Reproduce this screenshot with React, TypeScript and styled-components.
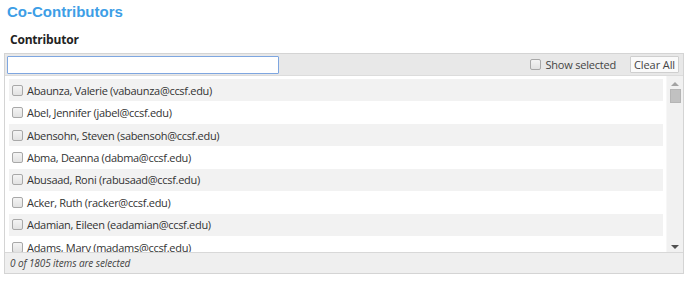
import React, { useState } from 'react';
import styled, { createGlobalStyle } from 'styled-components';

const GlobalStyle = createGlobalStyle`
  html, body {
    margin: 0;
    padding: 0;
    background: #fff;
  }
  body {
    font-family: 'Open Sans', 'Liberation Sans', sans-serif;
    color: #333;
  }
`;

const Page = styled.div`
  width: 689px;
  height: 282px;
  padding: 0 5px 0 4px;
  box-sizing: border-box;
`;

const Title = styled.h2`
  margin: 0;
  padding: 3px 0 0 3px;
  font-family: 'Liberation Sans', Arial, sans-serif;
  font-size: 15px;
  font-weight: bold;
  line-height: 18px;
  color: #3d9ee6;
`;

const Label = styled.h3`
  margin: 0;
  padding: 10px 0 0 6px;
  font-size: 12px;
  letter-spacing: -0.2px;
  font-weight: 700;
  line-height: 17px;
  color: #222;
`;

const Panel = styled.div`
  margin-top: 5px;
  border: 1px solid #d4d4d4;
  display: flex;
  flex-direction: column;
`;

const Toolbar = styled.div`
  display: flex;
  align-items: center;
  height: 21px;
  padding: 0 4px 0 2px;
  background: #e8e8e8;
  border-bottom: 1px solid #dcdcdc;
`;

const Search = styled.input`
  width: 272px;
  height: 18px;
  box-sizing: border-box;
  margin: 0;
  border: 1px solid #7ea6e0;
  border-radius: 1px;
  background: #fff;
  outline: none;
`;

const Spacer = styled.div`
  flex: 1;
`;

const ShowSelected = styled.label`
  display: flex;
  align-items: center;
  gap: 4px;
  font-size: 11px;
  letter-spacing: -0.2px;
  color: #444;
  margin-right: 14px;
`;

const Box = styled.span`
  display: inline-block;
  width: 9px;
  height: 9px;
  border: 1px solid #a8a8a8;
  border-radius: 2px;
  background: linear-gradient(#f4f4f4, #e2e2e2);
  flex: none;
`;

const ClearButton = styled.button`
  height: 17px;
  padding: 0 3px;
  font-family: 'Open Sans', 'Liberation Sans', sans-serif;
  font-size: 11px;
  letter-spacing: -0.1px;
  line-height: 15px;
  color: #444;
  background: #fafafa;
  border: 1px solid #cfcfcf;
  border-radius: 1px;
`;

const ListArea = styled.div`
  display: flex;
  height: 176px;
  background: #fff;
`;

const List = styled.div`
  flex: 1;
  overflow: hidden;
  padding: 3px 3px 0 4px;
`;

const Row = styled.div<{ $striped: boolean }>`
  display: flex;
  align-items: center;
  gap: 4px;
  height: 22.45px;
  padding-left: 3px;
  background: ${({ $striped }) => ($striped ? '#f2f2f2' : '#fff')};
  font-size: 11px;
  letter-spacing: -0.3px;
  color: #333;
  white-space: nowrap;
`;

const ScrollTrack = styled.div`
  width: 16px;
  display: flex;
  flex-direction: column;
  align-items: center;
  background: #f1f1f1;
  border-left: 1px solid #f7f7f7;
`;

const Arrow = styled.div<{ $up: boolean }>`
  width: 0;
  height: 0;
  margin: 6px 0 3px;
  border-left: 4px solid transparent;
  border-right: 4px solid transparent;
  ${({ $up }) =>
    $up ? 'border-bottom: 4px solid #a3a3a3;' : 'border-top: 4px solid #505050;'}
`;

const Thumb = styled.div`
  width: 11px;
  height: 14px;
  background: #c1c1c1;
  border: 1px solid #b5b5b5;
  box-sizing: border-box;
`;

const Footer = styled.div`
  height: 20px;
  display: flex;
  align-items: center;
  padding-left: 5px;
  background: #efefef;
  border-top: 1px solid #d8d8d8;
  font-size: 10px;
  letter-spacing: -0.1px;
  font-style: italic;
  color: #444;
`;

const people = [
  ['Abaunza, Valerie', 'vabaunza'],
  ['Abel, Jennifer', 'jabel'],
  ['Abensohn, Steven', 'sabensoh'],
  ['Abma, Deanna', 'dabma'],
  ['Abusaad, Roni', 'rabusaad'],
  ['Acker, Ruth', 'racker'],
  ['Adamian, Eileen', 'eadamian'],
  ['Adams, Mary', 'madams'],
  ['Adams, Thomas', 'tadams'],
];

function App() {
  const [query, setQuery] = useState('');

  return (
    <Page>
      <GlobalStyle />
      <Title>Co-Contributors</Title>
      <Label>Contributor</Label>
      <Panel>
        <Toolbar>
          <Search value={query} onChange={(e) => setQuery(e.target.value)} />
          <Spacer />
          <ShowSelected>
            <Box />
            Show selected
          </ShowSelected>
          <ClearButton>Clear All</ClearButton>
        </Toolbar>
        <ListArea>
          <List>
            {people.map(([name, id], i) => (
              <Row key={id} $striped={i % 2 === 0}>
                <Box />
                {name} ({id}@ccsf.edu)
              </Row>
            ))}
          </List>
          <ScrollTrack>
            <Arrow $up />
            <Thumb />
            <Spacer />
            <Arrow $up={false} />
          </ScrollTrack>
        </ListArea>
        <Footer>0 of 1805 items are selected</Footer>
      </Panel>
    </Page>
  );
}

export default App;
